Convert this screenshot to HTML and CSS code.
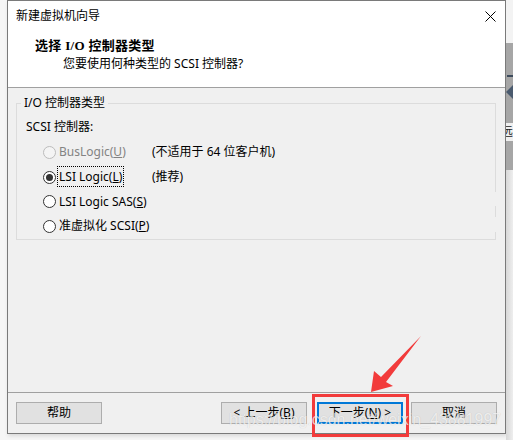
FILE: index.html
```html
<!DOCTYPE html>
<html lang="zh-CN">
<head>
<meta charset="utf-8">
<title>新建虚拟机向导</title>
<link rel="stylesheet" href="styles.css">
</head>
<body>
<div class="desk">
  <div class="dialog">
    <div class="titlebar">
      <span class="title">新建虚拟机向导</span>
      <svg class="close" width="11" height="11" viewBox="0 0 11 11"><path d="M0.5 0.5 L10.5 10.5 M10.5 0.5 L0.5 10.5" stroke="#000" stroke-width="1" fill="none"/></svg>
    </div>
    <div class="header">
      <div class="h-title">选择 I/O 控制器类型</div>
      <div class="h-sub">您要使用何种类型的 SCSI 控制器?</div>
    </div>
    <div class="main">
      <fieldset class="group">
        <legend>I/O 控制器类型</legend>
        <div class="sub-label">SCSI 控制器:</div>
        <div class="opt disabled"><span class="radio"></span><span class="opt-label">BusLogic(<u>U</u>)</span><span class="note">(不适用于 64 位客户机)</span></div>
        <div class="opt"><span class="radio checked"></span><span class="opt-label"><span class="focus">LSI Logic(<u>L</u>)</span></span><span class="note">(推荐)</span></div>
        <div class="opt"><span class="radio"></span><span class="opt-label wide">LSI Logic SAS(<u>S</u>)</span></div>
        <div class="opt"><span class="radio"></span><span class="opt-label wide">准虚拟化 SCSI(<u>P</u>)</span></div>
        <span class="gap gap1"></span>
        <span class="gap gap2"></span>
      </fieldset>
    </div>
    <div class="footer">
      <button class="btn">帮助</button>
      <span class="spacer"></span>
      <button class="btn">&lt; 上一步(<u>B</u>)</button>
      <button class="btn next">下一步(<u>N</u>) &gt;</button>
      <button class="btn cancel">取消</button>
    </div>
  </div>
  <div class="strip">
    <div class="strip-top"></div>
    <div class="strip-bar">
      <span class="dash"></span>
      <span class="chev"></span>
      <span class="glyph">远</span>
    </div>
    <div class="strip-rest"></div>
  </div>
</div>
<div class="annot-box"></div>
<svg class="arrow" width="513" height="440" viewBox="0 0 513 440">
  <polygon points="371,392 374,371 381,377 421,336 386,382 393,386" fill="#f23b3b"/>
</svg>
<div class="watermark">https://blog.csdn.net/weixin_43881997</div>
</body>
</html>
```
FILE: styles.css
```css
body {
  margin: 0;
  width: 513px;
  height: 440px;
  overflow: hidden;
  position: relative;
  background: #f6f6f6;
  font-family: "Noto Sans", "Noto Sans CJK SC", sans-serif;
  font-size: 12px;
  color: #000;
}

.desk {
  display: flex;
  padding-left: 7px;
  height: 440px;
}

.dialog {
  width: 499px;
  height: 434px;
  box-sizing: border-box;
  border: 1px solid #7a7a7a;
  background: #f0f0f0;
  display: flex;
  flex-direction: column;
  box-shadow: 1px 2px 4px rgba(0, 0, 0, 0.12);
}

.titlebar {
  height: 30px;
  flex: none;
  background: #fff;
  display: flex;
  align-items: center;
  justify-content: space-between;
  padding: 0 9px 0 8px;
}

.title {
  line-height: 16px;
}

.close {
  display: block;
}

.header {
  height: 57px;
  flex: none;
  box-sizing: border-box;
  background: #fff;
  border-bottom: 1px solid #a0a0a0;
  padding-top: 6px;
}

.h-title {
  font-family: "Liberation Serif", "Noto Sans CJK SC", serif;
  font-weight: bold;
  font-size: 13px;
  line-height: 18px;
  padding-left: 27px;
  letter-spacing: 0.3px;
}

.h-sub {
  line-height: 18px;
  padding-left: 55px;
}

.main {
  flex: 1;
  padding: 7px 9px 0 8px;
}

.group {
  position: relative;
  margin: 0;
  padding: 0 0 0 9px;
  border: 1px solid #dcdcdc;
  min-width: 0;
}

.group legend {
  padding: 0 3px;
  margin-left: -5px;
  line-height: 16px;
}

.sub-label {
  margin-top: 8px;
  line-height: 16px;
  margin-bottom: 5px;
}

.opt {
  display: flex;
  align-items: center;
  height: 24.7px;
  padding-left: 17px;
}

.radio {
  width: 13px;
  height: 13px;
  box-sizing: border-box;
  border: 1px solid #333;
  border-radius: 50%;
  background: #fff;
  margin-right: 3px;
  flex: none;
  display: flex;
  align-items: center;
  justify-content: center;
}

.radio.checked::after {
  content: "";
  width: 7px;
  height: 7px;
  border-radius: 50%;
  background: #333;
}

.opt-label {
  width: 93px;
  flex: none;
  line-height: 16px;
}

.opt-label.wide {
  width: auto;
}

.focus {
  outline: 1px dotted #000;
  outline-offset: 0;
  padding: 1px 1px;
  margin-left: -1px;
}

.note {
  line-height: 16px;
}

.disabled .radio {
  border-color: #bcbcbc;
  background: #f4f4f4;
}

.disabled .opt-label {
  color: #838383;
}

.gap {
  position: absolute;
  right: -1px;
  width: 1px;
  background: #f0f0f0;
}

.gap1 {
  top: 81px;
  height: 14px;
}

.gap2 {
  top: 106px;
  height: 15px;
}

.footer {
  height: 41px;
  flex: none;
  box-sizing: border-box;
  border-top: 1px solid #a0a0a0;
  display: flex;
  align-items: flex-start;
  padding: 9px 8px 0 8px;
}

.btn {
  width: 86px;
  height: 22px;
  box-sizing: border-box;
  border: 1px solid #adadad;
  background: #e1e1e1;
  font: inherit;
  color: #000;
  padding: 0;
  line-height: 18px;
}

.spacer {
  flex: 1;
}

.next {
  margin-left: 10px;
  border: 2px solid #0078d7;
}

.cancel {
  margin-left: 8px;
}

.strip {
  width: 7px;
  display: flex;
  flex-direction: column;
}

.strip-top {
  height: 43px;
  background: #f3f3f3;
}

.strip-bar {
  height: 127px;
  background: #a6a6a6;
  position: relative;
  overflow: hidden;
}

.dash {
  position: absolute;
  left: 1px;
  top: 32px;
  width: 6px;
  height: 2px;
  background: #3d4b5c;
}

.chev {
  position: absolute;
  left: 2px;
  top: 44px;
  width: 10px;
  height: 10px;
  background: #4a5a6e;
  transform: rotate(45deg);
}

.glyph {
  position: absolute;
  left: -5px;
  top: 80px;
  width: 14px;
  height: 18px;
  background: #f0f0f0;
  line-height: 18px;
  font-size: 12px;
  color: #222;
}

.strip-rest {
  flex: 1;
  background: linear-gradient(to right, #d8d8d8, #eeeeee);
}

.annot-box {
  position: absolute;
  left: 312px;
  top: 394px;
  width: 97px;
  height: 43px;
  box-sizing: border-box;
  border: 3px solid #f23b3b;
}

.arrow {
  position: absolute;
  left: 0;
  top: 0;
  pointer-events: none;
}

.watermark {
  position: absolute;
  left: 229px;
  top: 410px;
  font-family: "Liberation Sans", sans-serif;
  font-size: 16px;
  line-height: 20px;
  color: rgba(255, 255, 255, 0.72);
  text-shadow: 0 0 1px rgba(0, 0, 0, 0.18);
  white-space: nowrap;
}
```
